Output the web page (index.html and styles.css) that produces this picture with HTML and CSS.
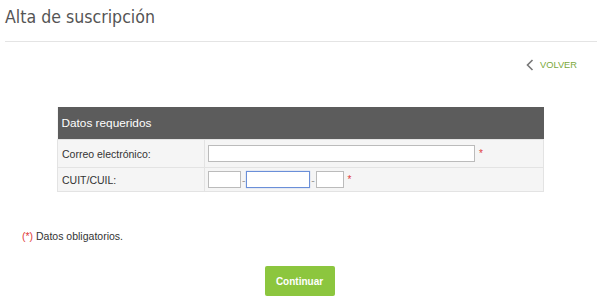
FILE: index.html
```html
<!DOCTYPE html>
<html lang="es">
<head>
  <meta charset="UTF-8" />
  <title>Alta de suscripción</title>
  <link rel="stylesheet" href="styles.css">
</head>
<body>
  <div class="page">
    <h1 class="title">Alta de suscripción</h1>

    <div class="back-row">
      <a class="back" href="#">
        <svg width="8" height="12" viewBox="0 0 8 12"><path d="M6.5 1 L1.5 6 L6.5 11" fill="none" stroke="#777" stroke-width="1.6"/></svg>
        VOLVER
      </a>
    </div>

    <table class="form-table">
      <tr>
        <th colspan="2">Datos requeridos</th>
      </tr>
      <tr>
        <td class="label">Correo electrónico:</td>
        <td class="field">
          <input type="text" class="email">
          <span class="req">*</span>
        </td>
      </tr>
      <tr>
        <td class="label">CUIT/CUIL:</td>
        <td class="field">
          <input type="text" class="cuit-a">
          <span class="dash">-</span>
          <input type="text" class="cuit-b focused">
          <span class="dash">-</span>
          <input type="text" class="cuit-c">
          <span class="req">*</span>
        </td>
      </tr>
    </table>

    <p class="note"><span class="red">(*)</span> Datos obligatorios.</p>

    <div class="actions">
      <button class="continue">Continuar</button>
    </div>
  </div>
</body>
</html>
```

FILE: styles.css
```css
body {
  margin: 0;
  background: #fff;
  font-family: 'Liberation Sans', Arial, sans-serif;
  color: #333;
}

.page {
  padding: 0 3px 0 5px;
}

.title {
  margin: 0;
  padding-top: 6px;
  height: 35px;
  border-bottom: 1px solid #e4e4e4;
  font-family: 'DejaVu Sans Condensed', 'DejaVu Sans', sans-serif;
  font-weight: normal;
  font-size: 17.6px;
  color: #555;
  line-height: 22px;
}

.back-row {
  display: flex;
  justify-content: flex-end;
  padding: 17px 20px 0 0;
  height: 21px;
}

.back {
  display: flex;
  align-items: center;
  gap: 6px;
  text-decoration: none;
  color: #7aa83a;
  font-size: 9.3px;
  height: 12px;
}

.form-table {
  margin: 27px 0 0 52px;
  width: 487px;
  border-collapse: collapse;
  background: #f5f5f5;
  font-size: 10.5px;
}

.form-table th {
  background: #5c5c5c;
  color: #fff;
  font-weight: normal;
  font-size: 11.8px;
  text-align: left;
  padding: 0 4px;
  height: 32px;
}

.form-table td {
  border: 1px solid #e3e3e3;
  padding: 0 4px;
}

.form-table tr:nth-child(2) td {
  height: 27px;
}

.form-table tr:nth-child(3) td {
  height: 23px;
}

.label {
  width: 138px;
  color: #333;
}

.field {
  white-space: nowrap;
  padding-left: 3px !important;
}

.field input {
  box-sizing: border-box;
  height: 17px;
  border: 1px solid #bbb;
  background: #fff;
  padding: 0;
  margin: 0;
  vertical-align: middle;
}

.email {
  width: 267px;
}

.cuit-a {
  width: 33px;
}

.cuit-b {
  width: 64px;
}

.cuit-c {
  width: 28px;
}

.focused {
  border: 1px solid #6a8fd8 !important;
  box-shadow: 0 0 1px #9bb4e8;
}

.dash {
  color: #999;
  margin: 0 -2px;
  vertical-align: middle;
}

.req {
  color: #e03c3c;
  margin-left: 1px;
  vertical-align: middle;
  font-size: 10px;
}

.note {
  margin: 38px 0 0 17px;
  font-size: 10.5px;
}

.red {
  color: #e03c3c;
}

.actions {
  display: flex;
  justify-content: center;
  margin-top: 24px;
  padding-right: 3px;
}

.continue {
  width: 70px;
  height: 30px;
  border: none;
  border-radius: 2px;
  background: #8cc63e;
  color: #fff;
  font-family: 'Liberation Sans', Arial, sans-serif;
  font-weight: bold;
  font-size: 10px;
}
```
